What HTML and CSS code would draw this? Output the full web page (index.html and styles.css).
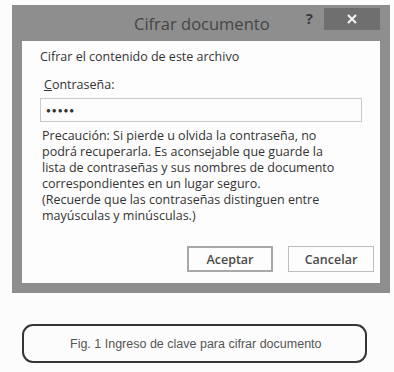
FILE: index.html
```html
<!DOCTYPE html>
<html lang="es">
<head>
    <meta charset="UTF-8">
    <title>Cifrar documento</title>
    <link rel="stylesheet" href="styles.css">
</head>
<body>

    <div class="dialog">
        <div class="title-bar">
            <span class="title">Cifrar documento</span>
            <span class="help">?</span>
            <span class="close">
                <svg width="12" height="12" viewBox="0 0 12 12">
                    <path d="M2 2 L10 10 M10 2 L2 10" stroke="#f2f2f2" stroke-width="2.2"/>
                </svg>
            </span>
        </div>

        <div class="dialog-body">
            <p class="heading">Cifrar el contenido de este archivo</p>
            <p class="label"><u>C</u>ontraseña:</p>
            <div class="password-box">●●●●●</div>
            <p class="warning">
                Precaución: Si pierde u olvida la contraseña, no<br>
                podrá recuperarla. Es aconsejable que guarde la<br>
                lista de contraseñas y sus nombres de documento<br>
                correspondientes en un lugar seguro.<br>
                (Recuerde que las contraseñas distinguen entre<br>
                mayúsculas y minúsculas.)
            </p>
            <div class="button-row">
                <button class="btn btn-default">Aceptar</button>
                <button class="btn">Cancelar</button>
            </div>
        </div>
    </div>

    <div class="caption">Fig. 1 Ingreso de clave para cifrar documento</div>

</body>
</html>
```

FILE: styles.css
```css
body {
    margin: 0;
    padding: 5px 0 0 12px;
    background-color: #fcfcfc;
    font-family: 'Open Sans', sans-serif;
    color: #333;
}

.dialog {
    width: 358px;
    padding: 0 10px 10px 10px;
    background-color: #8e8e8e;
}

.title-bar {
    height: 36px;
    display: flex;
    align-items: flex-start;
}

.title {
    margin: 7px 0 0 112px;
    font-size: 16.5px;
    color: #454545;
    white-space: nowrap;
}

.help {
    margin: 3px 0 0 auto;
    font-size: 15px;
    font-weight: bold;
    color: #3c3c3c;
}

.close {
    margin: 3px 0 0 11px;
    width: 56px;
    height: 22px;
    flex-shrink: 0;
    background-color: #6f6f6f;
    display: flex;
    align-items: center;
    justify-content: center;
}

.dialog-body {
    height: 242px;
    background-color: #fdfdfd;
    padding: 8px 0 0 18px;
    box-sizing: border-box;
    font-size: 12.5px;
}

.dialog-body p {
    margin: 0;
}

.heading {
    line-height: 16px;
}

.label {
    margin-top: 12px !important;
    padding-left: 4px;
    line-height: 16px;
}

.password-box {
    margin-top: 5px;
    width: 315px;
    height: 22px;
    border: 1px solid #c8c8c8;
    font-size: 8px;
    letter-spacing: 1px;
    line-height: 22px;
    padding-left: 5px;
    color: #333;
}

.warning {
    margin-top: 6px !important;
    padding-left: 2px;
    line-height: 16px;
}

.button-row {
    display: flex;
    gap: 15px;
    margin: 22px 0 0 147px;
}

.btn {
    width: 86px;
    height: 26px;
    font-family: 'Open Sans', sans-serif;
    font-size: 12.5px;
    font-weight: 600;
    color: #4a4a4a;
    background-color: #fdfdfd;
    border: 1px solid #bdbdbd;
    padding: 0;
}

.btn-default {
    border: 2px solid #a8a8a8;
}

.caption {
    margin: 31px 0 0 10px;
    width: 295px;
    height: 35px;
    border: 2px solid #363636;
    border-radius: 11px;
    display: flex;
    align-items: center;
    padding-left: 46px;
    font-family: 'Liberation Sans', sans-serif;
    font-size: 12.5px;
    color: #555;
}
```
